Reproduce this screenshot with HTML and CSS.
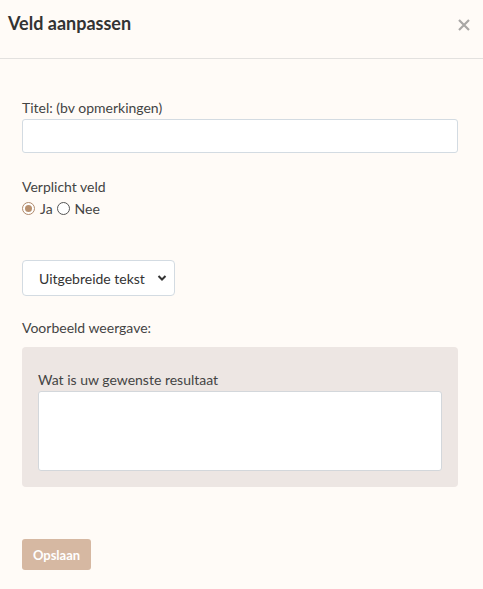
FILE: index.html
```html
<!DOCTYPE html>
<html lang="nl">
<head>
<meta charset="utf-8">
<title>Veld aanpassen</title>
<link rel="stylesheet" href="styles.css">
</head>
<body>
<div class="modal">
  <div class="modal-header">
    <h1 class="modal-title">Veld aanpassen</h1>
    <button class="close" type="button" aria-label="Sluiten">
      <svg width="12" height="12" viewBox="0 0 12 12"><path d="M1 1L11 11M11 1L1 11" stroke="#a9a7a5" stroke-width="2.2" stroke-linecap="butt"/></svg>
    </button>
  </div>
  <div class="modal-body">
    <div class="field">
      <label class="label">Titel: (bv opmerkingen)</label>
      <input class="input" type="text">
    </div>
    <div class="field field-req">
      <div class="label">Verplicht veld</div>
      <div class="radios">
        <span class="radio checked"></span><span class="radio-text">Ja</span>
        <span class="radio"></span><span class="radio-text">Nee</span>
      </div>
    </div>
    <div class="select">
      <span>Uitgebreide tekst</span>
      <svg width="10" height="8" viewBox="0 0 10 8"><path d="M1.5 2L5 5.5L8.5 2" fill="none" stroke="#333" stroke-width="2"/></svg>
    </div>
    <div class="label preview-label">Voorbeeld weergave:</div>
    <div class="preview">
      <div class="preview-label-inner">Wat is uw gewenste resultaat</div>
      <div class="textarea"></div>
    </div>
    <button class="save" type="button">Opslaan</button>
  </div>
</div>
</body>
</html>
```
FILE: styles.css
```css
html, body {
  margin: 0;
  padding: 0;
  background: #fffbf7;
  font-family: "Lato", "Open Sans", sans-serif;
  color: #3d3d3d;
}
.modal {
  width: 483px;
  height: 589px;
  box-sizing: border-box;
}
.modal-header {
  height: 59px;
  box-sizing: border-box;
  border-bottom: 1px solid #e3e1df;
  display: flex;
  align-items: flex-start;
  justify-content: space-between;
  padding: 0 13px 0 8px;
}
.modal-title {
  margin: 12px 0 0;
  font-size: 18px;
  line-height: 22px;
  font-weight: 700;
  color: #333;
}
.close {
  border: 0;
  background: none;
  padding: 0;
  margin-top: 19px;
  width: 12px;
  height: 12px;
  display: flex;
}
.modal-body {
  padding: 40px 25px 0 22px;
  display: flex;
  flex-direction: column;
  align-items: flex-start;
}
.label {
  font-size: 14px;
  color: #444;
  line-height: 17px;
}
.field {
  width: 100%;
  display: flex;
  flex-direction: column;
}
.input {
  margin-top: 3px;
  height: 34px;
  box-sizing: border-box;
  border: 1px solid #d3dbe2;
  border-radius: 3px;
  background: #fff;
  width: 100%;
}
.field-req {
  margin-top: 25px;
}
.radios {
  display: flex;
  align-items: center;
  margin-top: 5px;
  font-size: 14px;
  line-height: 17px;
  color: #444;
}
.radio {
  width: 11px;
  height: 11px;
  border: 1px solid #555;
  border-radius: 50%;
  background: #fff;
  box-sizing: content-box;
  position: relative;
}
.radio.checked {
  border-color: #b08a6c;
}
.radio.checked::after {
  content: "";
  position: absolute;
  left: 2px;
  top: 2px;
  width: 7px;
  height: 7px;
  border-radius: 50%;
  background: #b8906f;
}
.radio-text {
  margin: 0 4px 0 5px;
}
.select {
  margin-top: 43px;
  width: 153px;
  height: 36px;
  box-sizing: border-box;
  border: 1px solid #d3dbe2;
  border-radius: 4px;
  background: #fff;
  display: flex;
  align-items: center;
  justify-content: space-between;
  padding: 0 7px 0 16px;
  font-size: 14px;
  color: #333;
}
.preview-label {
  margin-top: 23px;
}
.preview {
  margin-top: 11px;
  width: 100%;
  box-sizing: border-box;
  background: #ede6e3;
  border-radius: 4px;
  padding: 24px 16px 16px;
}
.preview-label-inner {
  font-size: 14px;
  color: #444;
  line-height: 17px;
}
.textarea {
  margin-top: 3px;
  height: 80px;
  box-sizing: border-box;
  border: 1px solid #d3d7db;
  border-radius: 3px;
  background: #fff;
}
.save {
  margin-top: 52px;
  height: 31px;
  width: 69px;
  border: 0;
  border-radius: 3px;
  background: #d6b8a2;
  color: #fff;
  font-family: "Lato", "Open Sans", sans-serif;
  font-weight: 700;
  font-size: 13px;
  padding: 0;
}
```
